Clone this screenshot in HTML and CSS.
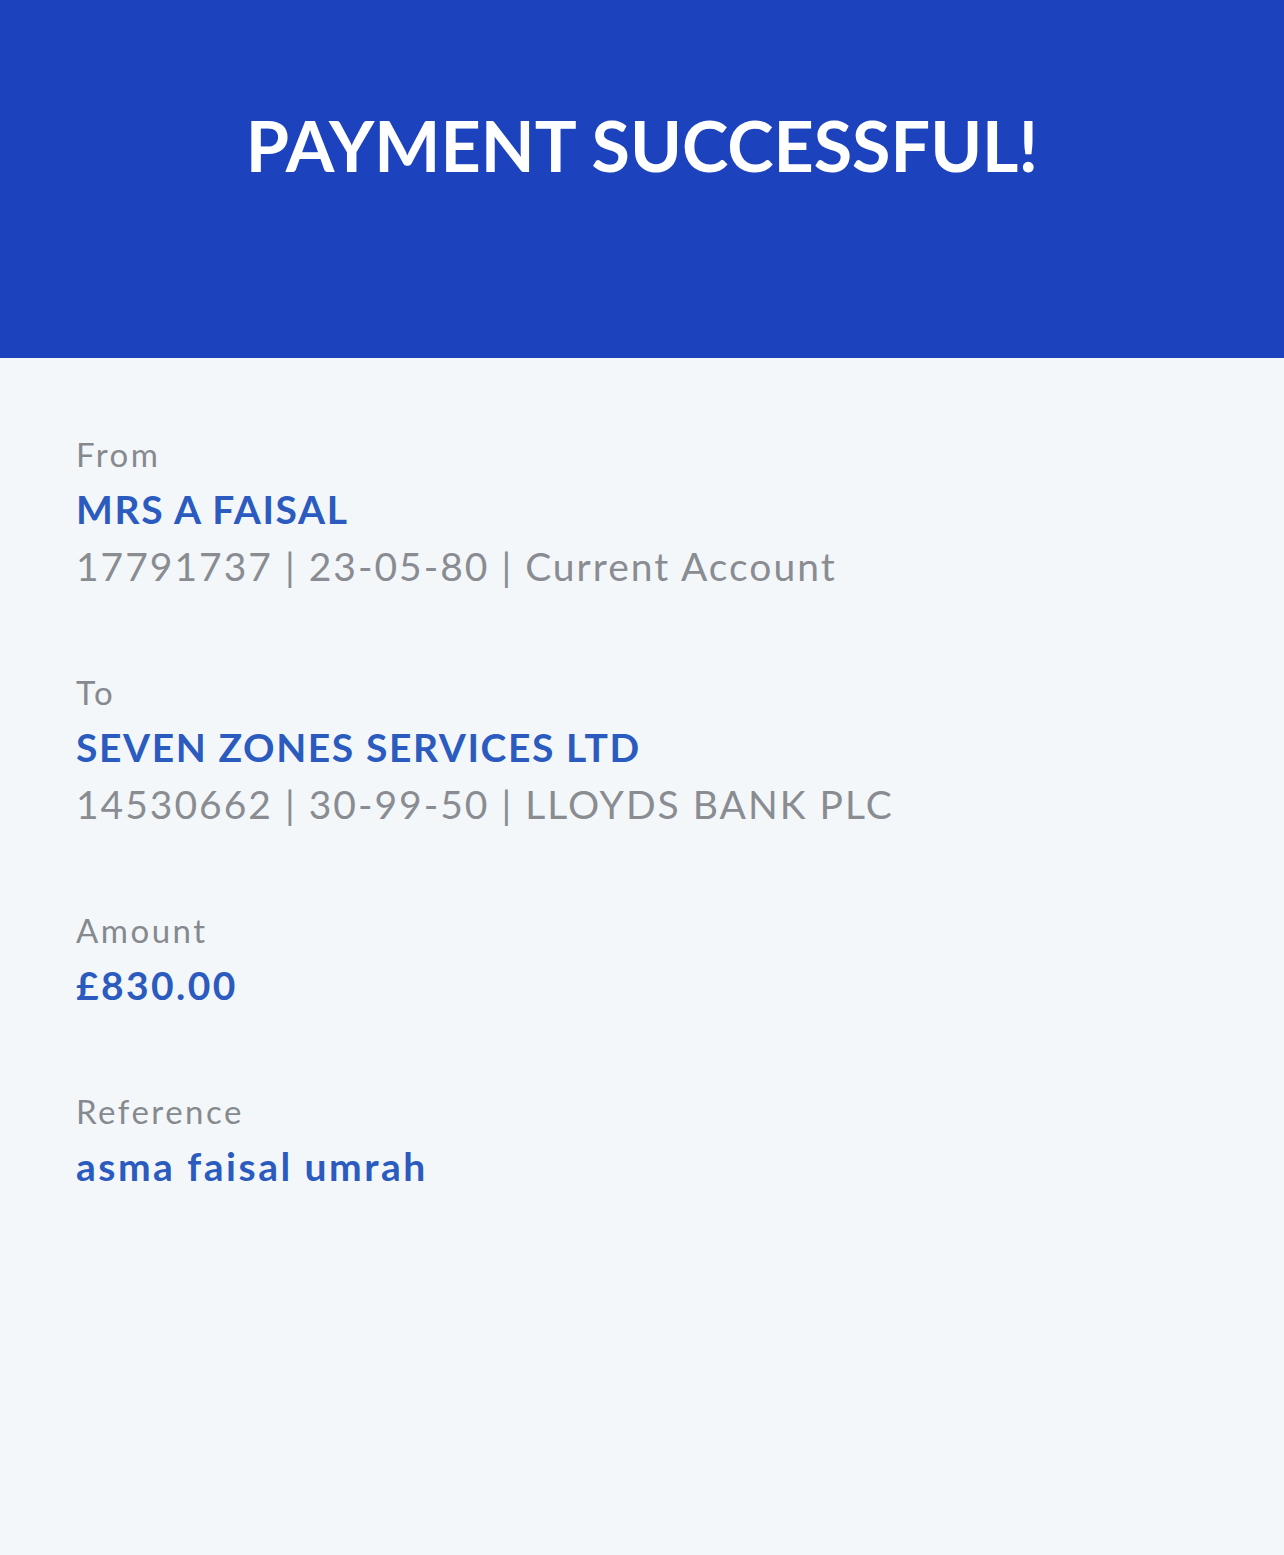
FILE: index.html
```html
<!DOCTYPE html>
<html lang="en">
<head>
<meta charset="utf-8">
<title>Payment successful</title>
<link rel="stylesheet" href="styles.css">
</head>
<body>
<header class="banner">
  <h1 class="banner-title">PAYMENT SUCCESSFUL!</h1>
</header>
<main class="details">
  <section class="item">
    <div class="label">From</div>
    <div class="value">MRS A FAISAL</div>
    <div class="meta">17791737 | 23-05-80 | Current Account</div>
  </section>
  <section class="item">
    <div class="label">To</div>
    <div class="value">SEVEN ZONES SERVICES LTD</div>
    <div class="meta">14530662 | 30-99-50 | LLOYDS BANK PLC</div>
  </section>
  <section class="item">
    <div class="label">Amount</div>
    <div class="value value-num">£830.00</div>
  </section>
  <section class="item">
    <div class="label">Reference</div>
    <div class="value value-lower">asma faisal umrah</div>
  </section>
</main>
</body>
</html>
```
FILE: styles.css
```css
html, body {
  margin: 0;
  padding: 0;
}
body {
  background: #f4f7fa;
  font-family: Lato, "Noto Sans", sans-serif;
  min-height: 1555px;
}
.banner {
  background: #1c43bd;
  height: 358px;
  box-sizing: border-box;
  padding-top: 110px;
}
.banner-title {
  margin: 0;
  color: #ffffff;
  font-size: 70px;
  line-height: 70px;
  font-weight: 700;
  text-align: center;
}
.details {
  padding: 70px 76px 0;
  display: flex;
  flex-direction: column;
  gap: 71px;
}
.item {
  display: flex;
  flex-direction: column;
}
.label {
  color: #868a8f;
  font-size: 33px;
  line-height: 53px;
  letter-spacing: 2.5px;
}
.value {
  color: #2b5bbf;
  font-size: 39px;
  line-height: 57px;
  font-weight: 700;
  letter-spacing: 1.6px;
}
.value-num {
  letter-spacing: 2.4px;
}
.value-lower {
  letter-spacing: 2.5px;
}
.meta {
  color: #898d92;
  font-size: 39px;
  line-height: 57px;
  letter-spacing: 2px;
}
```
